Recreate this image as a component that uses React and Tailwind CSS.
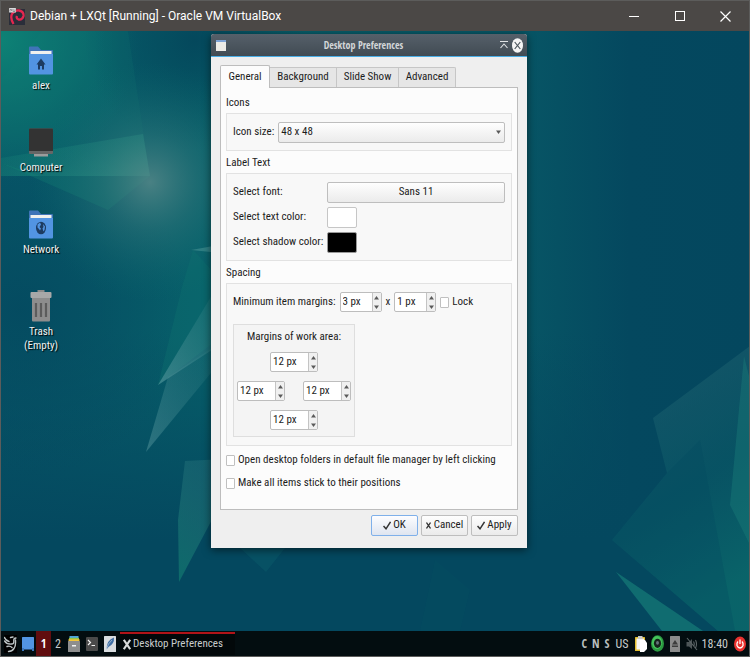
import React from "react";

const UI = "font-['Roboto_Condensed','DejaVu_Sans_Condensed',sans-serif]";
const STRONG = "font-['Open_Sans_Condensed','Roboto_Condensed',sans-serif] font-bold";

function Wallpaper() {
  return (
    <svg className="absolute inset-0 h-full w-full" viewBox="1 31 748 600" preserveAspectRatio="none" aria-hidden="true">
      <defs>
        <linearGradient id="base" x1="0" y1="0" x2="1" y2="0">
          <stop offset="0" stopColor="#075567" />
          <stop offset="0.28" stopColor="#07606a" />
          <stop offset="0.7" stopColor="#075565" />
          <stop offset="0.84" stopColor="#04485f" />
          <stop offset="1" stopColor="#04475e" />
        </linearGradient>
        <linearGradient id="fall" x1="0" y1="0" x2="0" y2="1">
          <stop offset="0.5" stopColor="#04485f" stopOpacity="0" />
          <stop offset="0.85" stopColor="#04485f" stopOpacity="1" />
        </linearGradient>
        <radialGradient id="corner" gradientUnits="userSpaceOnUse" cx="0" cy="40" r="140">
          <stop offset="0" stopColor="#0d8275" />
          <stop offset="1" stopColor="#0d8275" stopOpacity="0" />
        </radialGradient>
        <radialGradient id="glow" gradientUnits="userSpaceOnUse" cx="150" cy="182" r="120">
          <stop offset="0" stopColor="#5a8a8a" stopOpacity="0.8" />
          <stop offset="0.4" stopColor="#3b7c7e" stopOpacity="0.4" />
          <stop offset="1" stopColor="#0a6a6d" stopOpacity="0" />
        </radialGradient>
        <radialGradient id="dark" gradientUnits="userSpaceOnUse" cx="195" cy="40" r="110">
          <stop offset="0" stopColor="#04485c" />
          <stop offset="1" stopColor="#04485c" stopOpacity="0" />
        </radialGradient>
        <radialGradient id="left" gradientUnits="userSpaceOnUse" cx="20" cy="310" r="170">
          <stop offset="0" stopColor="#044a60" stopOpacity="0.9" />
          <stop offset="1" stopColor="#044a60" stopOpacity="0" />
        </radialGradient>
        <linearGradient id="tri" x1="0" y1="0" x2="1" y2="0.6">
          <stop offset="0" stopColor="#128174" stopOpacity="0.15" />
          <stop offset="1" stopColor="#2fa08c" stopOpacity="0.5" />
        </linearGradient>
        <linearGradient id="shard" x1="0" y1="1" x2="1" y2="0">
          <stop offset="0" stopColor="#5b9aa0" stopOpacity="0.6" />
          <stop offset="1" stopColor="#3d8a8c" stopOpacity="0.15" />
        </linearGradient>
        <linearGradient id="green" x1="0" y1="1" x2="0.3" y2="0">
          <stop offset="0" stopColor="#11796f" stopOpacity="0.9" />
          <stop offset="1" stopColor="#2d7a80" stopOpacity="0.45" />
        </linearGradient>
        <linearGradient id="right" x1="0" y1="0" x2="0.3" y2="1">
          <stop offset="0" stopColor="#2c6575" stopOpacity="0.5" />
          <stop offset="0.6" stopColor="#0b5d68" stopOpacity="0.5" />
          <stop offset="1" stopColor="#0b6c6c" stopOpacity="0.75" />
        </linearGradient>
      </defs>
      <rect x="1" y="31" width="748" height="600" fill="url(#base)" />
      <rect x="1" y="31" width="748" height="600" fill="url(#fall)" />
      <rect x="1" y="140" width="200" height="340" fill="url(#left)" />
      <rect x="1" y="31" width="250" height="200" fill="url(#corner)" />
      <rect x="80" y="31" width="240" height="130" fill="url(#dark)" />
      <polygon points="1,80 42,31 128,31 150,176 1,176" fill="#128072" opacity="0.15" />
      <polygon points="1,158 143,134 150,176 1,176" fill="url(#tri)" />
      <polygon points="1,163 40,176 150,176 135,188 108,210" fill="#138373" opacity="0.3" />
      <rect x="1" y="60" width="270" height="244" fill="url(#glow)" />
      <polygon points="191,250 230,243 230,254" fill="#4f9a99" opacity="0.5" />
      <polygon points="182,287 193,250 230,290 230,330 158,385" fill="#0e7471" opacity="0.35" />
      <polygon points="158,385 215,290 215,348" fill="url(#shard)" />
      <polygon points="146,452 168,377 215,346 215,368" fill="url(#shard)" opacity="0.8" />
      <polygon points="185,461 225,459 225,495 179,582 178,520" fill="url(#green)" opacity="0.8" />
      <polygon points="240,548 285,548 266,572" fill="#0f6670" opacity="0.3" />
      <polygon points="750,346 653,418 667,473 612,540 718,631 750,631" fill="url(#right)" />
      <polygon points="667,473 700,440 735,631 718,631 612,540" fill="#04485f" opacity="0.3" />
      <polygon points="744,356 750,380 750,545 730,505" fill="#1b7f7b" opacity="0.4" />
      <polygon points="616,572 703,631 662,631" fill="#157c78" opacity="0.7" />
      <polygon points="420,631 435,560 470,590 460,631" fill="#0a5a68" opacity="0.15" />
    </svg>
  );
}

function FolderIcon({ children }) {
  return (
    <svg width="24" height="29" viewBox="0 0 24 29" aria-hidden="true">
      <path d="M0 1.5Q0 0.5 1 0.5H9L12 4H23Q24 4 24 5V12H0Z" fill="#3f74b8" />
      <rect x="1.5" y="5" width="21" height="4" fill="#f0f0ee" />
      <path d="M0 8H24V27.5Q24 28.5 23 28.5H1Q0 28.5 0 27.5Z" fill="#5294e2" />
      {children}
    </svg>
  );
}

function HomeFolder() {
  return (
    <FolderIcon>
      <path d="M12 12.5L7.5 18.5H9V23.500H11V20H13V23.500H15V18.5H16.5Z" fill="#1d3b61" />
    </FolderIcon>
  );
}

function NetworkFolder() {
  return (
    <FolderIcon>
      <ellipse cx="12" cy="18" rx="5" ry="6.3" fill="#1d3b61" />
      <path d="M8.500 14.500L11 12.500L12 14.500L10.500 17L12 18.500L11 20.500L10 19L8.500 17.500ZM14 14L16 16.500L15.500 20L14.500 21.500L13.500 18.500L14.500 17Z" fill="#5294e2" />
    </FolderIcon>
  );
}

function ComputerIcon() {
  return (
    <svg width="24" height="29" viewBox="0 0 24 29" aria-hidden="true">
      <rect x="5" y="25" width="14" height="3.5" fill="#9c9c9c" />
      <rect x="0" y="0.5" width="24" height="25.5" rx="1" fill="#666" />
      <path d="M0 1.5Q0 0.5 1 0.5H23Q24 0.5 24 1.5V23H0Z" fill="#333" />
    </svg>
  );
}

function TrashIcon() {
  return (
    <svg width="22" height="32" viewBox="0 0 22 32" aria-hidden="true">
      <rect x="7.500" y="0" width="7" height="3" fill="#8b8b8b" />
      <path d="M2 7H20V30.500Q20 31.500 19 31.500H3Q2 31.500 2 30.500Z" fill="#8d8d8d" />
      <rect x="0.500" y="2" width="21" height="6" rx="1" fill="#a8a8a8" />
      <path d="M6 13V27M11 13V27M16 13V27" stroke="#5c5c5c" strokeWidth="2.200" />
    </svg>
  );
}

function DesktopIcon({ icon, label }) {
  return (
    <button type="button" className="flex h-[82px] w-20 flex-col items-center">
      <span className="flex h-8 items-center">{icon}</span>
      <span className="mt-[3px] text-center leading-[14px] whitespace-pre-line text-[#eef2f2] [text-shadow:1px_1px_1px_#000]">{label}</span>
    </button>
  );
}

function Arrow({ down }) {
  return (
    <svg width="5" height="4" viewBox="0 0 5 4" aria-hidden="true">
      <path d={down ? "M0 0.5H5L2.5 4Z" : "M0 3.5H5L2.5 0Z"} fill="#5a5a5a" />
    </svg>
  );
}

function Spin({ value, label, wide }) {
  return (
    <span className={`flex h-5 rounded-[2px] border border-[#bdbdbd] bg-white ${wide ? "w-12" : "w-[42px]"}`}>
      <input aria-label={label} defaultValue={value} className="min-w-0 flex-1 bg-transparent pl-0.5 leading-4 outline-none" />
      <span className="flex w-[9px] flex-col border-l border-[#c4c4c4] bg-[#f0f0f0]">
        <button type="button" aria-label={`Increase ${label}`} className="flex flex-1 items-center justify-center"><Arrow /></button>
        <button type="button" aria-label={`Decrease ${label}`} className="flex flex-1 items-center justify-center"><Arrow down /></button>
      </span>
    </span>
  );
}

function Check({ children }) {
  return (
    <label className="flex items-center gap-[3px] whitespace-nowrap">
      <input type="checkbox" className="h-[11px] w-[9px] shrink-0 appearance-none rounded-[1px] border border-[#c0c0c0] bg-white checked:bg-[#5294e2]" />
      {children}
    </label>
  );
}

function Group({ title, className, children }) {
  return (
    <section>
      <h2 className="h-5 leading-5">{title}</h2>
      <div className={`border border-[#e2e2e2] bg-[#f8f8f8] px-1.5 ${className}`}>{children}</div>
    </section>
  );
}

const btn = "rounded-[2px] border border-[#bebebe] bg-linear-to-b from-[#fefefe] to-[#ebebeb]";

function Tick() {
  return (
    <svg width="8" height="9" viewBox="0 0 8 9" aria-hidden="true">
      <path d="M0.500 5L3 7.800L7.500 0.800" fill="none" stroke="#333" strokeWidth="1.500" />
    </svg>
  );
}

function Preferences() {
  return (
    <section aria-label="Desktop Preferences" className="absolute top-[3px] left-[210px] flex w-[316px] flex-col rounded-t-[3px] bg-[#efefef] text-[#1c1c1c] shadow-[0_2px_8px_rgba(0,0,0,0.55)]">
      <header className="flex h-[23px] items-center rounded-t-[3px] border-b border-[#4aaee6] bg-linear-to-b from-[#56606a] to-[#414b53] px-1">
        <svg width="12" height="12" viewBox="0 0 12 12" aria-hidden="true">
          <rect x="1" y="1" width="10" height="11" fill="#ecebe6" />
          <rect x="1" y="1" width="10" height="2" fill="#7fa4d6" />
        </svg>
        <h1 className={`flex-1 text-center text-[10px] text-[#d3d6d8] ${STRONG}`}>Desktop Preferences</h1>
        <button type="button" aria-label="Shade" className="mr-1">
          <svg width="8" height="8" viewBox="0 0 8 8" aria-hidden="true">
            <path d="M0 0.500H8M0.500 7L4 3L7.500 7" fill="none" stroke="#e0e3e5" strokeWidth="1.100" />
          </svg>
        </button>
        <button type="button" aria-label="Close">
          <svg width="11" height="15" viewBox="0 0 11 15" aria-hidden="true">
            <ellipse cx="5.500" cy="7.500" rx="5.500" ry="7.300" fill="#f4f4f4" />
            <path d="M2.700 4L8.300 11M8.300 4L2.700 11" stroke="#4a545c" strokeWidth="1.200" />
          </svg>
        </button>
      </header>

      <div className="flex flex-col px-[9px] pt-2 pb-3">
        <div role="tablist" className="flex h-[22px] items-end">
          <button role="tab" aria-selected="true" type="button" className="z-10 -mb-px h-[23px] w-[50px] rounded-t-[2px] border border-b-0 border-[#bdbdbd] bg-[#fcfcfc]">General</button>
          <button role="tab" aria-selected="false" type="button" className="h-5 w-[67px] border-t border-r border-[#c6c6c6] bg-[#e6e6e6]">Background</button>
          <button role="tab" aria-selected="false" type="button" className="h-5 w-[62px] border-t border-r border-[#c6c6c6] bg-[#e6e6e6]">Slide Show</button>
          <button role="tab" aria-selected="false" type="button" className="h-5 w-[57px] rounded-tr-[2px] border-t border-r border-[#c6c6c6] bg-[#e6e6e6]">Advanced</button>
        </div>

        <div role="tabpanel" className="flex h-[423px] flex-col border border-[#bdbdbd] bg-[#fcfcfc] px-[5px] pt-[5px]">
          <Group title="Icons" className="flex h-[38px] items-center">
            <label htmlFor="size" className="shrink-0 pr-1">Icon size:</label>
            <span className="relative flex flex-1">
              <select id="size" className={`h-[21px] w-full appearance-none pl-0.5 ${btn}`}>
                <option>48 x 48</option>
              </select>
              <span className="pointer-events-none absolute top-2 right-1"><Arrow down /></span>
            </span>
          </Group>

          <div className="mt-0.5">
            <Group title="Label Text" className="grid h-[88px] grid-cols-[94px_1fr] content-center items-center gap-y-1 whitespace-nowrap">
              <label htmlFor="font">Select font:</label>
              <button id="font" type="button" className={`h-[21px] ${btn}`}>Sans 11</button>
              <label htmlFor="text">Select text color:</label>
              <button id="text" type="button" aria-label="White" className="h-[21px] w-[30px] rounded-[2px] border border-[#c6c6c6] bg-white" />
              <label htmlFor="shadow">Select shadow color:</label>
              <button id="shadow" type="button" aria-label="Black" className="h-[21px] w-[30px] rounded-[2px] border border-[#999] bg-black" />
            </Group>
          </div>

          <div className="mt-0.5">
            <Group title="Spacing" className="h-[163px] pt-2">
              <div className="flex h-5 items-center gap-1">
                <span>Minimum item margins:</span>
                <Spin value="3 px" label="horizontal item margin" />
                <span>x</span>
                <Spin value="1 px" label="vertical item margin" />
                <Check>Lock</Check>
              </div>
              <fieldset className="mt-3 flex h-[113px] w-[122px] flex-col items-center border border-[#dedede] bg-[#f4f4f4] px-[3px] pt-[3px]">
                <span className="h-[18px] leading-[18px]">Margins of work area:</span>
                <span className="mt-1.5"><Spin wide value="12 px" label="top margin" /></span>
                <span className="my-[9px] flex w-full justify-between">
                  <Spin wide value="12 px" label="left margin" />
                  <Spin wide value="12 px" label="right margin" />
                </span>
                <Spin wide value="12 px" label="bottom margin" />
              </fieldset>
            </Group>
          </div>

          <div className="mt-1 flex flex-col gap-[3px] leading-5">
            <Check>Open desktop folders in default file manager by left clicking</Check>
            <Check>Make all items stick to their positions</Check>
          </div>
        </div>

        <div className="mt-[5px] flex justify-end gap-[3px]">
          <button type="button" className="flex h-[21px] w-[47px] items-center justify-center gap-0.5 rounded-[2px] border border-[#7fb0ea] bg-linear-to-b from-[#fdfdff] to-[#dfe5f0]"><Tick />OK</button>
          <button type="button" className={`flex h-[21px] w-[47px] items-center justify-center gap-[3px] ${btn}`}>
            <svg width="5" height="7" viewBox="0 0 5 7" aria-hidden="true"><path d="M0.500 0.500L4.500 6.500M4.500 0.500L0.500 6.500" stroke="#333" strokeWidth="1.300" /></svg>
            Cancel
          </button>
          <button type="button" className={`flex h-[21px] w-[47px] items-center justify-center gap-0.5 ${btn}`}><Tick />Apply</button>
        </div>
      </div>
    </section>
  );
}

function Taskbar() {
  return (
    <footer className="flex h-[25px] shrink-0 items-center bg-[#030d10] whitespace-nowrap text-[#c8cccc]">
      <button type="button" aria-label="Menu" className="ml-[3px]">
        <svg width="13" height="18" viewBox="0 0 13 18" aria-hidden="true">
          <rect width="13" height="18" fill="#000" />
          <path d="M0.500 2.500Q1.500 5.500 5 6.500M0.500 6Q2.500 9 6 9M7 9Q10 9.500 9.800 6Q9.500 3 12 3M11.500 5Q12 11 10 13.500Q8 16.500 4.500 16.500M3 11.500Q6 10.500 8 12.500M6.500 2.500L9 2" fill="none" stroke="#bcc4c6" strokeWidth="1.400" strokeLinecap="round" />
        </svg>
      </button>
      <button type="button" aria-label="Show desktop" className="ml-[5px]">
        <svg width="12" height="14" viewBox="0 0 12 14" aria-hidden="true">
          <rect width="12" height="12.500" rx="0.500" fill="#5294e2" />
          <path d="M0 11H2V14H0ZM10 11H12V14H10Z" fill="#3b76bd" />
        </svg>
      </button>
      <button type="button" className={`ml-0.5 h-[25px] w-[15px] bg-[#610d0f] text-[12px] text-white ${STRONG}`}>1</button>
      <button type="button" className="h-[25px] w-[14px] text-[12px]">2</button>
      <button type="button" aria-label="Files" className="ml-[3px]">
        <svg width="12" height="16" viewBox="0 0 12 16" aria-hidden="true">
          <rect x="1.500" width="9" height="3" fill="#4aa3df" />
          <rect x="1" y="1.800" width="10" height="2" fill="#8fc54b" />
          <rect x="0.500" y="3.200" width="11" height="2.500" fill="#f3c63c" />
          <rect y="5" width="12" height="11" rx="0.500" fill="#8e8e8e" />
          <rect x="4" y="9" width="4" height="1.500" fill="#f3f3f3" />
        </svg>
      </button>
      <button type="button" aria-label="Terminal" className="ml-1.5">
        <svg width="12" height="14" viewBox="0 0 12 14" aria-hidden="true">
          <rect width="12" height="14" rx="1" fill="#4a4a4a" />
          <path d="M2 3L4.500 5.500L2 8M5.500 8.500H9" fill="none" stroke="#f2f2f2" strokeWidth="1.200" />
        </svg>
      </button>
      <button type="button" aria-label="Text editor" className="ml-1.5">
        <svg width="12" height="16" viewBox="0 0 12 16" aria-hidden="true">
          <rect width="12" height="16" rx="0.500" fill="#d9dde0" />
          <path d="M2.500 13.500Q2.500 4 10 1.500Q10.500 8 4.500 11Z" fill="#3f6fa5" />
          <path d="M2 14Q4 7 8 4" fill="none" stroke="#cfdbe8" strokeWidth="0.600" />
        </svg>
      </button>
      <button type="button" className="ml-1 flex h-[23px] w-[115px] items-center gap-0.5 border-t-2 border-[#b01318] bg-[#02080a] pl-[3px]">
        <svg width="8" height="11" viewBox="0 0 8 11" aria-hidden="true">
          <path d="M0.800 0.800L7.200 10.200M7.200 0.800L0.800 10.200" stroke="#d8dada" strokeWidth="2.200" />
        </svg>
        <span>Desktop Preferences</span>
      </button>

      <div className="ml-auto flex items-center pr-[3px] text-[12px]">
        <span className={`flex gap-[5px] text-[#b9bfbf] ${STRONG}`}><span>C</span><span>N</span><span>S</span></span>
        <span className="ml-1.5">US</span>
        <svg className="ml-1.5" width="12" height="16" viewBox="0 0 12 16" aria-hidden="true">
          <rect y="1" width="10" height="14" rx="0.500" fill="#e2bd2e" />
          <rect x="1.500" y="2.500" width="7.500" height="11" fill="#f4f4f4" />
          <rect x="3" width="4.500" height="3" fill="#c9c9c9" />
          <path d="M5 4H10L12 7V13L9 16H5Z" fill="#fff" />
        </svg>
        <svg className="ml-1" width="13" height="17" viewBox="0 0 13 17" aria-hidden="true">
          <ellipse cx="6.500" cy="8.500" rx="6.500" ry="8.300" fill="#2a9a40" />
          <ellipse cx="6" cy="7.500" rx="5" ry="6.500" fill="#46c45c" />
          <ellipse cx="6.500" cy="8.300" rx="3.600" ry="4.600" fill="#16241c" />
          <ellipse cx="6.500" cy="7.800" rx="1.500" ry="1.900" fill="#66737c" />
        </svg>
        <svg className="ml-1.5" width="10" height="16" viewBox="0 0 10 16" aria-hidden="true">
          <rect width="10" height="16" rx="0.500" fill="#8b8b8b" />
          <path d="M5 4L8 8.500H2ZM2 9.500H8V11H2Z" fill="#3c3c3c" />
        </svg>
        <svg className="ml-1.5" width="12" height="14" viewBox="0 0 12 14" aria-hidden="true">
          <path d="M0.500 5H3L6 2V12L3 9.500H0.500Z" fill="#4d5557" />
          <path d="M7.500 4.500Q9 7 7.500 9.500M9.500 3Q11.500 7 9.500 11M1 1L11 13" fill="none" stroke="#5d6567" strokeWidth="1.100" />
        </svg>
        <time className="ml-1">18:40</time>
        <button type="button" aria-label="Power" className="ml-1.5">
          <svg width="12" height="16" viewBox="0 0 12 16" aria-hidden="true">
            <ellipse cx="6" cy="8" rx="6" ry="7.500" fill="#e8322f" />
            <path d="M4 5.500Q2.500 7 3 9.500Q4 12 6 12T9 9.500Q9.500 7 8 5.500M6 3.500V8" fill="none" stroke="#fff" strokeWidth="1.300" />
          </svg>
        </button>
      </div>
    </footer>
  );
}

export default function App() {
  return (
    <div className={`flex min-h-screen flex-col border border-[#5c5c5b] bg-[#04485f] text-[11px] ${UI}`}>
      <header className="flex h-[30px] shrink-0 items-center bg-[#4b4846] pl-2 text-white">
        <svg width="16" height="17" viewBox="0 0 16 17" aria-hidden="true">
          <rect y="1" width="16" height="16" fill="#2a2e3a" />
          <path d="M4.500 16Q1 10 3 6Q5.500 2 10 2.500Q15 3.500 14.500 8Q13.500 12 9.500 11.500Q7 10.500 8 8" fill="none" stroke="#e5274f" strokeWidth="2.300" />
          <rect width="7" height="4.500" rx="0.500" fill="#d9d9dc" />
          <path d="M1 3.500V1.500H2.500V3M4 1V3.500H6V1.500" fill="none" stroke="#777" strokeWidth="0.700" />
        </svg>
        <span className="ml-[5px] flex-1 font-['Segoe_UI',Roboto,sans-serif] text-[12px]">Debian + LXQt [Running] - Oracle VM VirtualBox</span>
        <div className="flex h-full">
          <button type="button" aria-label="Minimize" className="flex w-[46px] items-center justify-center">
            <svg width="10" height="10" viewBox="0 0 10 10" aria-hidden="true"><path d="M0 5.500H10" stroke="#fff" /></svg>
          </button>
          <button type="button" aria-label="Maximize" className="flex w-[45px] items-center justify-center">
            <svg width="10" height="10" viewBox="0 0 10 10" aria-hidden="true"><rect x="0.500" y="0.500" width="9" height="9" fill="none" stroke="#fff" /></svg>
          </button>
          <button type="button" aria-label="Close window" className="flex w-[47px] items-center justify-center">
            <svg width="11" height="11" viewBox="0 0 11 11" aria-hidden="true"><path d="M0.500 0.500L10.500 10.500M10.500 0.500L0.500 10.500" stroke="#fff" strokeWidth="1.200" /></svg>
          </button>
        </div>
      </header>

      <main className="relative min-h-[530px] flex-1 overflow-hidden">
        <Wallpaper />
        <nav className="relative flex w-20 flex-col pt-[13px]">
          <DesktopIcon icon={<HomeFolder />} label="alex" />
          <DesktopIcon icon={<ComputerIcon />} label="Computer" />
          <DesktopIcon icon={<NetworkFolder />} label="Network" />
          <DesktopIcon icon={<TrashIcon />} label={"Trash\n(Empty)"} />
        </nav>
        <Preferences />
      </main>

      <Taskbar />
    </div>
  );
}
